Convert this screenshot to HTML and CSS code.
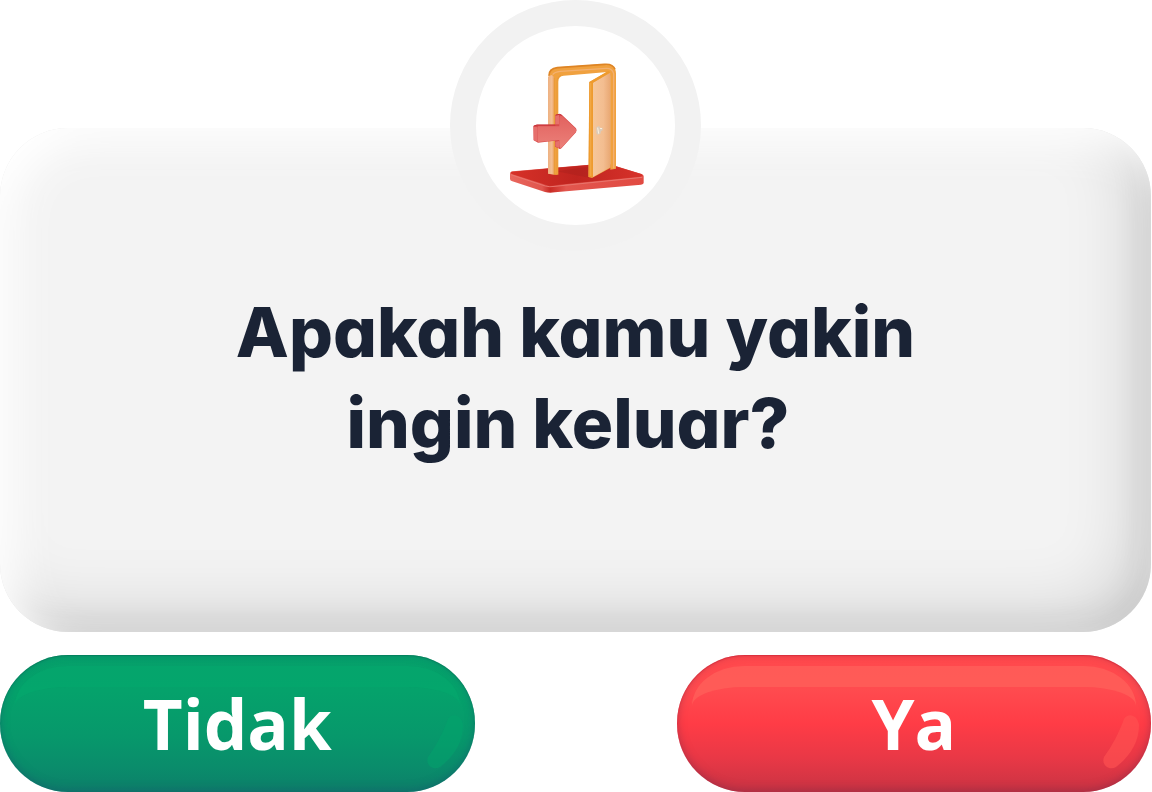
FILE: index.html
```html
<!DOCTYPE html>
<html lang="id">
<head>
<meta charset="utf-8">
<meta name="viewport" content="width=device-width, initial-scale=1">
<title>Konfirmasi keluar</title>
<link rel="stylesheet" href="styles.css">
</head>
<body>
<main class="dialog" role="alertdialog" aria-labelledby="question">
  <section class="card">
    <div class="badge">
      <svg class="door" viewBox="0 0 450 435" aria-hidden="true">
        <defs>
          <linearGradient id="floor" x1="0" x2="1"><stop offset="0" stop-color="#d63128"/><stop offset=".5" stop-color="#bf241f"/><stop offset="1" stop-color="#d7322b"/></linearGradient>
          <linearGradient id="rim" x1="0" x2="1"><stop offset="0" stop-color="#e9665d"/><stop offset=".24" stop-color="#e0564e"/><stop offset=".3" stop-color="#c92a24"/><stop offset=".42" stop-color="#e2564e"/><stop offset="1" stop-color="#e14a42"/></linearGradient>
          <linearGradient id="leaf" x1="0" x2="1"><stop offset="0" stop-color="#f6c799"/><stop offset=".6" stop-color="#f3bd90"/><stop offset="1" stop-color="#e9a873"/></linearGradient>
          <linearGradient id="arrow" x1="0" y1="0" x2="0" y2="1"><stop offset="0" stop-color="#e2625f"/><stop offset="1" stop-color="#eb8079"/></linearGradient>
          <linearGradient id="post" x1="0" x2="1"><stop offset="0" stop-color="#eeb181"/><stop offset=".6" stop-color="#f3bf93"/><stop offset="1" stop-color="#eca15c"/></linearGradient>
        </defs>
        <path d="M27 356Q27 350 36 349L300 326Q316 325 326 328L422 357Q428 359 428 364V384Q428 388 420 389L162 412Q145 415 132 411L34 379Q27 377 27 372Z" fill="url(#rim)"/>
        <path d="M32 350L296 327Q314 325 325 328L420 357Q430 362 418 365L160 391Q145 393 133 389L34 358Q26 354 32 350Z" fill="url(#floor)"/>
        <path d="M29 359L133 393Q146 397 162 394L424 367" fill="none" stroke="#e9756d" stroke-width="3"/>
        <path d="M166 349L264 335V368Z" fill="#9f1e1b" opacity=".3"/>
        <path d="M143 356V62Q143 40 169 37L310 27Q345 26 345 56V341L328 344V65Q328 51 311 52L188 62Q172 63 172 80V359Z" fill="#f0a13f"/>
        <path d="M144 62Q144 41 169 38L310 28Q336 26 342 43" fill="none" stroke="#de8424" stroke-width="5"/>
        <path d="M155 59Q160 51 178 49L315 40Q334 39 338 56V340" fill="none" stroke="#f3b070" stroke-width="4"/>
        <path d="M141 355V67Q144 61 153 60L160 67V359L141 356Z" fill="url(#post)"/>
        <path d="M160 68V358H168V79Q168 66 180 60" fill="none" stroke="#e99b37" stroke-width="3"/>
        <path d="M265 81L322 48L329 53V338L273 369L262 366Z" fill="#eda044"/>
        <path d="M276 83L328 53V337L276 366Z" fill="url(#leaf)"/>
        <path d="M265 81L322 48L328 52L276 83V367L263 365Z" fill="#ee9b2e"/>
        <path d="M269 84V363" stroke="#f2a843" stroke-width="4"/>
        <path d="M286 217L294 213L298 219L305 218V226L300 228L298 236L290 239L286 235Z" fill="#d9cbbb"/>
        <path d="M290 218L293 236M297 220L303 221" stroke="#fff1de" stroke-width="3"/>
        <path d="M97 214L107 209H163V180L176 177Q181 178 184 181L225 220Q229 226 225 232L182 279Q177 284 172 280L162 275V257L111 263L98 256Z" fill="#d94b4b"/>
        <path d="M111 214H175V187Q177 179 184 184L224 221Q228 226 224 231L183 277Q175 284 175 271V255L111 261Z" fill="url(#arrow)"/>
        <path d="M98 215L110 217V260L98 255ZM163 182L174 179V208H163ZM163 260L174 258V279L163 274Z" fill="#e66f6c"/>
        <path d="M98 213L108 210H163M164 180L176 178L182 181" fill="none" stroke="#c52f37" stroke-width="3"/>
      </svg>
    </div>
    <h1 class="question" id="question">Apakah kamu yakin<br>ingin keluar?&nbsp;</h1>
  </section>
  <div class="actions">
    <button class="button button-no" type="button">Tidak
      <svg class="glint" viewBox="0 0 38 56" aria-hidden="true"><path d="M22 6C26-1 36 2 37 12C37 30 27 44 14 54C7 58-1 52 2 44C10 33 17 20 22 6Z"/></svg>
    </button>
    <button class="button button-yes" type="button">Ya
      <svg class="glint" viewBox="0 0 38 56" aria-hidden="true"><path d="M22 6C26-1 36 2 37 12C37 30 27 44 14 54C7 58-1 52 2 44C10 33 17 20 22 6Z"/></svg>
    </button>
  </div>
</main>
</body>
</html>
```
FILE: styles.css
```css
* {
  box-sizing: border-box;
}

body {
  margin: 0;
  background: #fff;
}

.dialog {
  display: flex;
  flex-direction: column;
  gap: 23px;
  padding: 128px 1px 0 0;
}

.card {
  display: flex;
  flex-direction: column;
  align-items: center;
  gap: 36px;
  padding: 0 40px 163px;
  border-radius: 68px;
  background: #f3f3f3;
  box-shadow:
    inset 20px 20px 40px #fff,
    inset -10px -10px 30px rgba(0, 0, 0, 0.08),
    inset -20px -20px 68px rgba(0, 0, 0, 0.13);
}

.badge {
  display: grid;
  place-items: center;
  width: 251px;
  height: 251px;
  margin-top: -128px;
  border: 26px solid #f2f2f2;
  border-radius: 50%;
  background: #fff;
}

.door {
  width: 150px;
  height: 145px;
  margin-top: 4px;
}

.question {
  margin: 0;
  color: #1a2335;
  font: 800 69px/91px Inter, sans-serif;
  font-feature-settings: "cv11", "ss03";
  text-align: center;
}

.actions {
  display: grid;
  grid-template-columns: 1fr 1fr;
  column-gap: 202px;
}

.button {
  position: relative;
  padding: 20px;
  border: 0;
  border-radius: 68px;
  color: #fff;
  font: 700 69px/97px "Open Sans", sans-serif;
  isolation: isolate;
  cursor: pointer;
}

.button::before {
  content: "";
  position: absolute;
  z-index: -1;
  top: 11px;
  left: 15px;
  right: 15px;
  height: 60px;
  border-top: 21px solid var(--gloss);
  border-radius: 52px 52px 0 0 / 40px 40px 0 0;
}

.glint {
  position: absolute;
  right: 11px;
  bottom: 23px;
  width: 38px;
  height: 56px;
  fill: var(--glint);
}

.button-no {
  --gloss: rgba(3, 170, 110, 0.5);
  --glint: rgba(3, 166, 108, 0.45);
  background: linear-gradient(#069f6a, #05a26b 26%, #07986b 60%, #0a8c6b 82%, #0d7f69);
  box-shadow:
    inset 0 1px 1px rgba(0, 110, 80, 0.5),
    inset 0 -2px 8px rgba(20, 90, 110, 0.5);
}

.button-yes {
  --gloss: rgba(255, 100, 92, 0.65);
  --glint: rgba(255, 82, 82, 0.65);
  background: linear-gradient(#ff484c, #ff4b4f 25%, #ff3c46 50%, #e93846 75%, #c93343);
  box-shadow:
    inset 0 1px 1px rgba(200, 30, 50, 0.5),
    inset 0 -2px 8px rgba(130, 40, 70, 0.5);
}
```
